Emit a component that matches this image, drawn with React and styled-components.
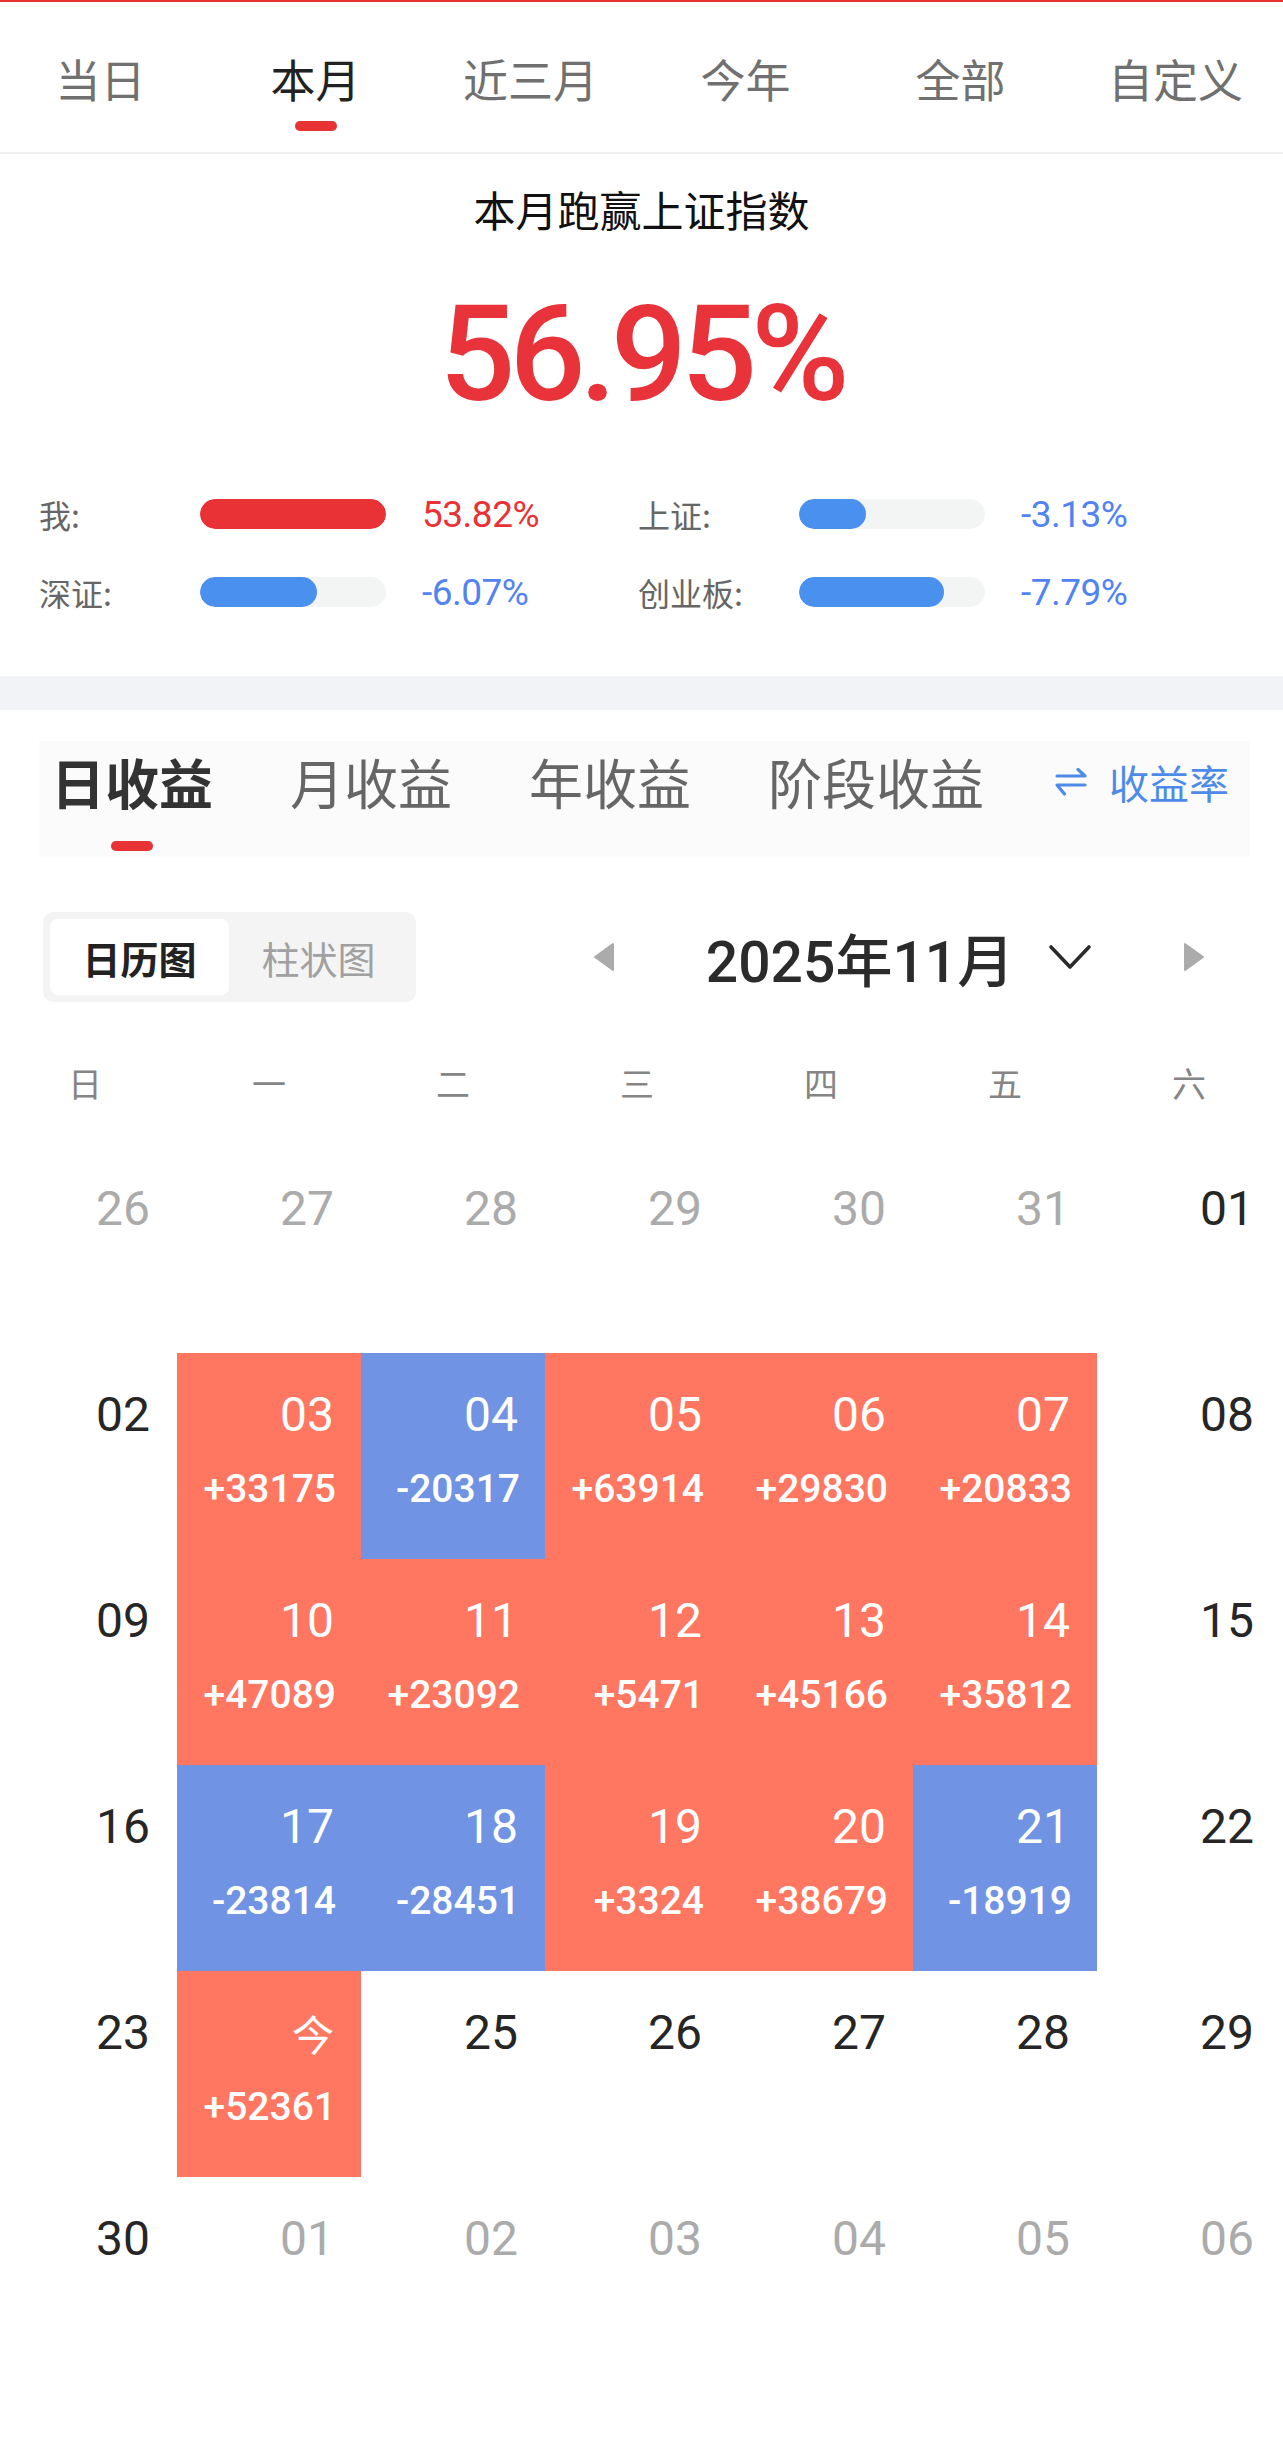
import React from 'react';
import styled, { createGlobalStyle } from 'styled-components';

const CJK = `"Noto Sans CJK SC", "Noto Sans", sans-serif`;
const NUM = `Roboto, "Noto Sans CJK SC", sans-serif`;

const GlobalStyle = createGlobalStyle`
  html, body {
    margin: 0;
    padding: 0;
    background: #fff;
  }
  body {
    font-family: ${CJK};
    overflow-x: hidden;
  }
  * {
    box-sizing: border-box;
  }
`;

const Page = styled.div`
  width: 1283px;
  min-height: 2437px;
  background: #fff;
  overflow: hidden;
`;

/* ---------- period tabs ---------- */

const PeriodBar = styled.nav`
  display: grid;
  grid-template-columns: repeat(6, 1fr);
  height: 154px;
  border-top: 2px solid #e83234;
  border-bottom: 2px solid #f0f0f0;
  margin-left: -7px;
`;

const PeriodTab = styled.div`
  display: flex;
  flex-direction: column;
  align-items: center;
  padding-top: 54px;
  font-size: 45px;
  line-height: 45px;
  color: ${props => (props.active ? '#222' : '#707070')};
`;

const TabMark = styled.span`
  display: block;
  width: 42px;
  height: 10px;
  border-radius: 5px;
  background: #e83234;
  margin-top: ${props => props.gap}px;
  visibility: ${props => (props.show ? 'visible' : 'hidden')};
`;

/* ---------- summary ---------- */

const Summary = styled.section`
  display: flex;
  flex-direction: column;
  align-items: center;
  padding: 34px 0 59px;
`;

const SummaryTitle = styled.div`
  font-size: 42px;
  line-height: 42px;
  color: #111;
`;

const BigRate = styled.div`
  margin-top: 58px;
  font-family: ${NUM};
  font-size: 134px;
  line-height: 134px;
  letter-spacing: -6px;
  font-weight: 500;
  color: #e9333a;
`;

const CompareGrid = styled.div`
  align-self: stretch;
  display: grid;
  grid-template-columns: 599px 1fr;
  row-gap: 28px;
  margin-top: 67px;
  padding-left: 39px;
`;

const CompareItem = styled.div`
  display: flex;
  align-items: center;
  height: 50px;
`;

const CompareLabel = styled.span`
  width: 161px;
  font-size: 32px;
  color: #666;
`;

const Track = styled.div`
  width: 186px;
  height: 30px;
  border-radius: 15px;
  background: #f3f5f5;
  overflow: hidden;
`;

const Fill = styled.div`
  height: 100%;
  border-radius: 15px;
  background: ${props => (props.up ? '#e93235' : '#4a90ee')};
`;

const CompareValue = styled.span`
  margin-left: 36px;
  font-family: ${NUM};
  font-size: 37px;
  letter-spacing: -0.5px;
  color: ${props => (props.up ? '#e93235' : '#5283f2')};
`;

const Band = styled.div`
  height: 34px;
  background: #f2f3f7;
`;

/* ---------- earnings tabs ---------- */

const RangeBar = styled.div`
  display: flex;
  align-items: flex-start;
  height: 116px;
  margin: 31px 33px 0 39px;
  padding: 14px 21px 0 12px;
  background: #fbfbfb;
  white-space: nowrap;
`;

const RangeTabs = styled.div`
  display: flex;
  gap: 77px;
  flex-shrink: 0;
`;

const RangeTab = styled.div`
  display: flex;
  flex-direction: column;
  align-items: center;
  font-size: 54px;
  line-height: 54px;
  font-weight: ${props => (props.active ? 700 : 400)};
  color: ${props => (props.active ? '#333' : '#666')};
`;

const RateSwitch = styled.div`
  display: flex;
  align-items: center;
  gap: 22px;
  margin-left: auto;
  flex-shrink: 0;
  height: 54px;
  font-size: 40px;
  color: #4e8be8;
`;

/* ---------- calendar toolbar ---------- */

const Toolbar = styled.div`
  display: flex;
  align-items: center;
  margin-top: 55px;
  padding-left: 43px;
`;

const ViewToggle = styled.div`
  display: flex;
  width: 373px;
  height: 90px;
  padding: 7px;
  border-radius: 10px;
  background: #f4f4f4;
`;

const ViewOption = styled.div`
  width: 179px;
  display: flex;
  align-items: center;
  justify-content: center;
  border-radius: 8px;
  font-size: 38px;
  font-weight: ${props => (props.active ? 700 : 400)};
  color: ${props => (props.active ? '#222' : '#a0a0a0')};
  background: ${props => (props.active ? '#fff' : 'transparent')};
`;

const MonthNav = styled.div`
  display: flex;
  align-items: center;
  justify-content: space-between;
  width: 612px;
  margin-left: 177px;
`;

const MonthPicker = styled.div`
  display: flex;
  align-items: center;
  gap: 34px;
  font-family: ${NUM};
  font-size: 57px;
  font-weight: 500;
  color: #2b2b2b;
`;

/* ---------- calendar ---------- */

const WeekRow = styled.div`
  display: grid;
  grid-template-columns: repeat(7, 184px);
  margin: 54px 0 0 -7px;
  height: 54px;
  line-height: 54px;
  font-size: 34px;
  color: #858585;
  text-align: center;
`;

const DayGrid = styled.div`
  display: grid;
  grid-template-columns: repeat(7, 184px);
  grid-auto-rows: 206px;
  margin: 37px 0 0 -7px;
`;

const cellBg = { up: '#ff7661', down: '#7093e4' };

const DayCell = styled.div`
  display: flex;
  flex-direction: column;
  align-items: flex-end;
  padding: 38px 27px 0 0;
  background: ${props => cellBg[props.tone] || 'transparent'};
`;

const DayNum = styled.span`
  font-family: ${NUM};
  font-size: 48px;
  line-height: 48px;
  color: ${props => (props.tone ? '#fff' : props.muted ? '#ababab' : '#262626')};
`;

const TodayMark = styled.span`
  font-size: 42px;
  line-height: 48px;
  color: #fff;
`;

const Amount = styled.span`
  margin: 30px -2px 0 0;
  font-family: ${NUM};
  font-size: 39px;
  line-height: 40px;
  font-weight: 500;
  color: #fff;
`;

/* ---------- icons ---------- */

const SwapIcon = () => (
  <svg width="32" height="28" viewBox="0 0 32 28" fill="none" aria-hidden="true">
    <path d="M2 8H30L23 1.5" stroke="currentColor" strokeWidth="3.2" strokeLinecap="round" strokeLinejoin="round" />
    <path d="M30 17H2L9.5 26" stroke="currentColor" strokeWidth="3.2" strokeLinecap="round" strokeLinejoin="round" />
  </svg>
);

const Triangle = ({ dir }) => (
  <svg width="22" height="30" viewBox="0 0 22 30" aria-hidden="true">
    <polygon
      points={dir === 'left' ? '20,2 20,28 2,15' : '2,2 2,28 20,15'}
      fill="#ababab"
      stroke="#ababab"
      strokeWidth="2"
      strokeLinejoin="round"
    />
  </svg>
);

const Chevron = () => (
  <svg width="44" height="26" viewBox="0 0 44 26" fill="none" aria-hidden="true">
    <polyline points="3,3 22,23 41,3" stroke="#2b2b2b" strokeWidth="3.6" strokeLinecap="round" strokeLinejoin="round" />
  </svg>
);

/* ---------- data ---------- */

const periods = ['当日', '本月', '近三月', '今年', '全部', '自定义'];
const ranges = ['日收益', '月收益', '年收益', '阶段收益'];
const weekdays = ['日', '一', '二', '三', '四', '五', '六'];

const compares = [
  { label: '我:', value: '53.82%', fill: 100, up: true },
  { label: '上证:', value: '-3.13%', fill: 36 },
  { label: '深证:', value: '-6.07%', fill: 63 },
  { label: '创业板:', value: '-7.79%', fill: 78 }
];

const m = (day) => ({ day, muted: true });
const d = (day, amount) => ({
  day,
  amount,
  tone: amount ? (amount.startsWith('-') ? 'down' : 'up') : undefined
});

const weeks = [
  [m('26'), m('27'), m('28'), m('29'), m('30'), m('31'), d('01')],
  [d('02'), d('03', '+33175'), d('04', '-20317'), d('05', '+63914'), d('06', '+29830'), d('07', '+20833'), d('08')],
  [d('09'), d('10', '+47089'), d('11', '+23092'), d('12', '+5471'), d('13', '+45166'), d('14', '+35812'), d('15')],
  [d('16'), d('17', '-23814'), d('18', '-28451'), d('19', '+3324'), d('20', '+38679'), d('21', '-18919'), d('22')],
  [d('23'), { ...d('24', '+52361'), today: true }, d('25'), d('26'), d('27'), d('28'), d('29')],
  [d('30'), m('01'), m('02'), m('03'), m('04'), m('05'), m('06')]
];

const App = () => (
  <Page>
    <GlobalStyle />

    <PeriodBar>
      {periods.map(p => (
        <PeriodTab key={p} active={p === '本月'}>
          {p}
          <TabMark gap={20} show={p === '本月'} />
        </PeriodTab>
      ))}
    </PeriodBar>

    <Summary>
      <SummaryTitle>本月跑赢上证指数</SummaryTitle>
      <BigRate>56.95%</BigRate>
      <CompareGrid>
        {compares.map(c => (
          <CompareItem key={c.label}>
            <CompareLabel>{c.label}</CompareLabel>
            <Track>
              <Fill up={c.up} style={{ width: `${c.fill}%` }} />
            </Track>
            <CompareValue up={c.up}>{c.value}</CompareValue>
          </CompareItem>
        ))}
      </CompareGrid>
    </Summary>

    <Band />

    <RangeBar>
      <RangeTabs>
        {ranges.map(r => (
          <RangeTab key={r} active={r === '日收益'}>
            {r}
            <TabMark gap={32} show={r === '日收益'} />
          </RangeTab>
        ))}
      </RangeTabs>
      <RateSwitch>
        <SwapIcon />
        收益率
      </RateSwitch>
    </RangeBar>

    <Toolbar>
      <ViewToggle>
        <ViewOption active>日历图</ViewOption>
        <ViewOption>柱状图</ViewOption>
      </ViewToggle>
      <MonthNav>
        <Triangle dir="left" />
        <MonthPicker>
          2025年11月
          <Chevron />
        </MonthPicker>
        <Triangle dir="right" />
      </MonthNav>
    </Toolbar>

    <WeekRow>
      {weekdays.map(w => (
        <span key={w}>{w}</span>
      ))}
    </WeekRow>

    <DayGrid>
      {weeks.flat().map((c, i) => (
        <DayCell key={i} tone={c.tone}>
          {c.today ? (
            <TodayMark>今</TodayMark>
          ) : (
            <DayNum tone={c.tone} muted={c.muted}>{c.day}</DayNum>
          )}
          {c.amount && <Amount>{c.amount}</Amount>}
        </DayCell>
      ))}
    </DayGrid>
  </Page>
);

export default App;
